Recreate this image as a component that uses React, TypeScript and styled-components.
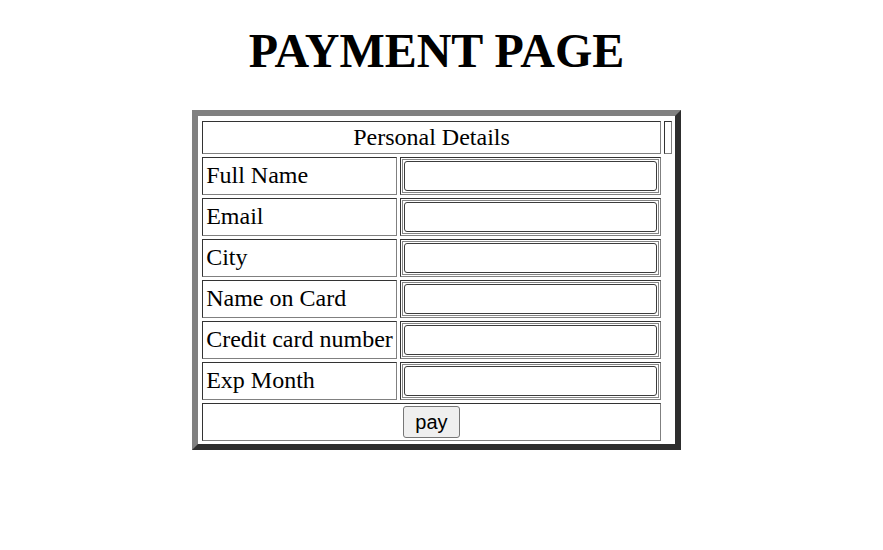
import React from 'react';
import styled, { createGlobalStyle } from 'styled-components';

const GlobalStyle = createGlobalStyle`
  body {
    margin: 0;
    background: #ffffff;
    font-family: 'Liberation Serif', 'Times New Roman', serif;
    color: #000000;
  }
`;

const Page = styled.div`
  width: 873px;
  display: flex;
  flex-direction: column;
  align-items: center;
`;

const Title = styled.h1`
  margin: 23px 0 32px;
  font-size: 48px;
  font-weight: bold;
  line-height: 55px;
  text-align: center;
`;

const FormTable = styled.table`
  border-collapse: separate;
  border-spacing: 3px;
  border-style: solid;
  border-width: 6px;
  border-color: #808080 #2e2e2e #2e2e2e #808080;
  padding: 2px 0 0 1px;
  font-size: 24px;
`;

const Cell = styled.td<{ $width?: number; $center?: boolean; $height?: number }>`
  box-sizing: border-box;
  width: ${(p) => (p.$width ? `${p.$width}px` : 'auto')};
  height: ${(p) => (p.$height ? `${p.$height}px` : '38px')};
  padding: ${(p) => (p.$center ? '1px 3px' : '0 3px 2px')};
  border: 1px solid;
  border-color: #333333 #808080 #808080 #333333;
  text-align: ${(p) => (p.$center ? 'center' : 'left')};
  vertical-align: middle;
  white-space: nowrap;
`;

const FieldCell = styled(Cell)`
  padding: 1px;
`;

const InputFrame = styled.span`
  display: block;
  box-sizing: border-box;
  width: 257px;
  height: 34px;
  border: 1px solid #858585;
  padding: 1px;
`;

const TextInput = styled.input`
  display: block;
  box-sizing: border-box;
  width: 100%;
  height: 100%;
  margin: 0;
  padding: 1px 2px;
  border: 1px solid #3c3c3c;
  border-radius: 3px;
  background: #ffffff;
  font-family: 'Liberation Sans', Arial, sans-serif;
  font-size: 20px;
  outline: none;
`;

const PayButton = styled.button`
  box-sizing: border-box;
  width: 57px;
  height: 32px;
  padding: 0;
  border: 1px solid #767676;
  border-radius: 3px;
  background: #efefef;
  color: #000000;
  font-family: 'Liberation Sans', Arial, sans-serif;
  font-size: 20px;
  line-height: 23px;
`;

const fields = ['Full Name', 'Email', 'City', 'Name on Card', 'Credit card number', 'Exp Month'];

export default function App() {
  return (
    <>
      <GlobalStyle />
      <Page>
        <Title>PAYMENT PAGE</Title>
        <FormTable>
          <tbody>
            <tr>
              <Cell colSpan={2} $center $height={33}>
                Personal Details
              </Cell>
              <Cell $width={6} $height={33} />
            </tr>
            {fields.map((label) => (
              <tr key={label}>
                <Cell $width={194}>{label}</Cell>
                <FieldCell $width={261}>
                  <InputFrame>
                    <TextInput type="text" />
                  </InputFrame>
                </FieldCell>
              </tr>
            ))}
            <tr>
              <Cell colSpan={2} $center>
                <PayButton type="button">pay</PayButton>
              </Cell>
            </tr>
          </tbody>
        </FormTable>
      </Page>
    </>
  );
}
